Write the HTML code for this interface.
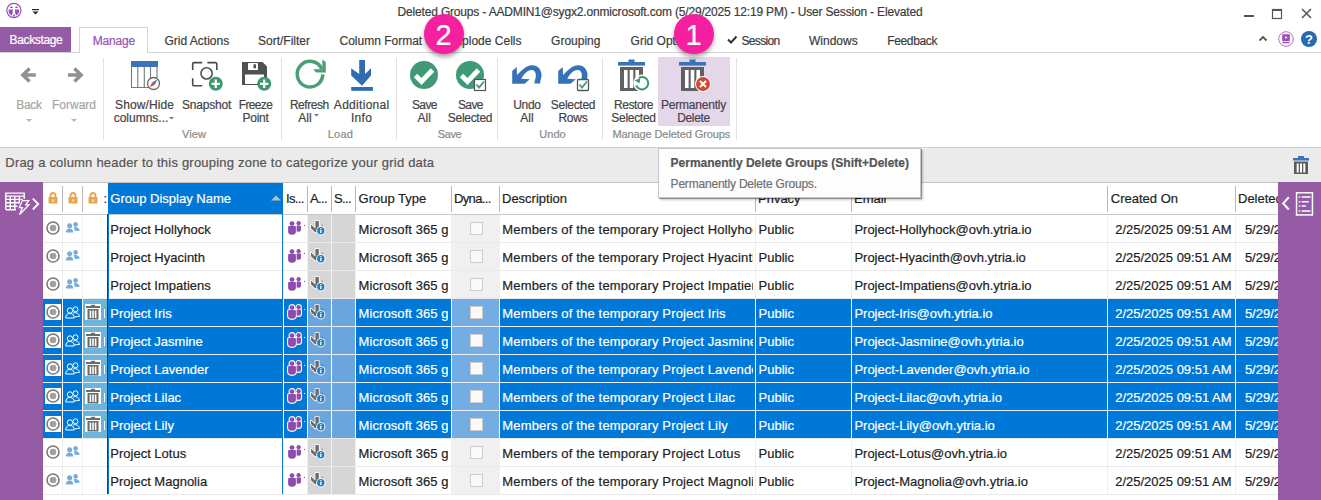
<!DOCTYPE html><html><head><meta charset="utf-8"><style>
html,body{margin:0;padding:0}
body{width:1321px;height:500px;overflow:hidden;position:relative;background:#fff;font-family:"Liberation Sans",sans-serif}
.t{position:absolute;white-space:nowrap;-webkit-text-stroke-width:0.2px}
.r{position:absolute}
</style></head><body>
<svg class="r" style="left:4px;top:1px;" width="20" height="20" viewBox="0 0 20 20"><circle cx="9.9" cy="9.5" r="7.1" fill="none" stroke="#9a50b4" stroke-width="1.2"/><path d="M6 7 Q6 5.2 7.3 5.2 Q8.6 5.2 8.6 7 Z M11.2 7 Q11.2 5.2 12.5 5.2 Q13.8 5.2 13.8 7 Z M4.6 8.6 H8.8 V12 L7.6 14.6 Q5 13.5 4.6 10.5 Z M15.2 8.6 H11 V12 L12.2 14.6 Q14.8 13.5 15.2 10.5 Z M8.6 15.4 L10 12.8 L11.4 15.4 Z" fill="#9a50b4"/></svg>
<svg class="r" style="left:31px;top:7px;" width="10" height="10" viewBox="0 0 10 10"><rect x="1" y="2" width="7" height="1.2" fill="#222"/><path d="M1.5 4.5 L7.5 4.5 L4.5 7.5 Z" fill="#222"/></svg>
<div class="t" style="left:397.6px;top:6.14px;font-size:12px;line-height:12px;color:#3c3c3c;font-weight:normal;letter-spacing:-0.175px">Deleted Groups - AADMIN1@sygx2.onmicrosoft.com (5/29/2025 12:19 PM) - User Session - Elevated</div>
<div class="r" style="left:1244px;top:15px;width:10px;height:2px;background:#555;"></div>
<svg class="r" style="left:1271px;top:8px;" width="12" height="12" viewBox="0 0 12 12"><rect x="1.5" y="1.5" width="9" height="9" fill="none" stroke="#555" stroke-width="1.2"/><rect x="1" y="1" width="10" height="2" fill="#555"/></svg>
<svg class="r" style="left:1300px;top:7px;" width="13" height="13" viewBox="0 0 13 13"><path d="M2 2 L11 11 M11 2 L2 11" stroke="#555" stroke-width="1.5"/></svg>
<div class="r" style="left:0px;top:27px;width:71px;height:25px;background:#955ca5;"></div>
<div class="t" style="left:9.5px;top:34.14px;font-size:12px;line-height:12px;color:#fff;font-weight:normal;letter-spacing:-0.35px">Backstage</div>
<div class="r" style="left:79px;top:27px;width:69px;height:26px;background:#fff;box-sizing:border-box;border:1px solid #d4d4d4;border-bottom:none"></div>
<div class="r" style="left:0px;top:52px;width:1321px;height:1px;background:#d4d4d4;"></div>
<div class="r" style="left:80px;top:52px;width:67px;height:1px;background:#fff;"></div>
<div class="t" style="left:92.7px;top:35.14px;font-size:12px;line-height:12px;color:#9a50b4;font-weight:normal;letter-spacing:-0.18px">Manage</div>
<div class="t" style="left:164.5px;top:35.14px;font-size:12px;line-height:12px;color:#3c3c3c;font-weight:normal;letter-spacing:0px">Grid Actions</div>
<div class="t" style="left:258px;top:35.14px;font-size:12px;line-height:12px;color:#3c3c3c;font-weight:normal;letter-spacing:0px">Sort/Filter</div>
<div class="t" style="left:339.5px;top:35.14px;font-size:12px;line-height:12px;color:#3c3c3c;font-weight:normal;letter-spacing:0px">Column Format</div>
<div class="t" style="left:448.1px;top:35.14px;font-size:12px;line-height:12px;color:#3c3c3c;font-weight:normal;letter-spacing:0px">Explode Cells</div>
<div class="t" style="left:551.1px;top:35.14px;font-size:12px;line-height:12px;color:#3c3c3c;font-weight:normal;letter-spacing:0px">Grouping</div>
<div class="t" style="left:630.6px;top:35.14px;font-size:12px;line-height:12px;color:#3c3c3c;font-weight:normal;letter-spacing:0px">Grid Options</div>
<div class="t" style="left:741.4px;top:35.14px;font-size:12px;line-height:12px;color:#3c3c3c;font-weight:normal;letter-spacing:-0.64px">Session</div>
<div class="t" style="left:809px;top:35.14px;font-size:12px;line-height:12px;color:#3c3c3c;font-weight:normal;letter-spacing:0px">Windows</div>
<div class="t" style="left:887.2px;top:35.14px;font-size:12px;line-height:12px;color:#3c3c3c;font-weight:normal;letter-spacing:-0.35px">Feedback</div>
<svg class="r" style="left:726px;top:34px;" width="13" height="11" viewBox="0 0 13 11"><path d="M2 5.5 L5 8.5 L10.5 2.5" fill="none" stroke="#333" stroke-width="2"/></svg>
<svg class="r" style="left:1258px;top:34px;" width="10" height="8" viewBox="0 0 10 8"><path d="M1.5 6.5 L5 3 L8.5 6.5" fill="none" stroke="#555" stroke-width="1.8"/></svg>
<svg class="r" style="left:1277px;top:31px;" width="18" height="18" viewBox="0 0 18 18"><circle cx="9" cy="8" r="7.3" fill="#fff" stroke="#a45cc0" stroke-width="0.9"/><rect x="5.2" y="3.2" width="7.6" height="6.8" rx="0.5" fill="#9a50b4"/><rect x="5.2" y="10.8" width="7.6" height="1.4" rx="0.4" fill="#9a50b4"/><path d="M8.2 5.2 L10.6 6.6 L8.2 8 Z" fill="#fff"/></svg>
<svg class="r" style="left:1300px;top:30px;" width="18" height="18" viewBox="0 0 18 18"><circle cx="9" cy="9" r="8" fill="#2a6ab1"/><text x="9" y="13.6" text-anchor="middle" font-family="Liberation Sans" font-weight="bold" font-size="13" fill="#fff">?</text></svg>
<div class="r" style="left:0px;top:147px;width:1321px;height:1px;background:#d2d2d2;"></div>
<div class="r" style="left:103px;top:58px;width:1px;height:82px;background:#e1e1e1;"></div>
<div class="r" style="left:281px;top:58px;width:1px;height:82px;background:#e1e1e1;"></div>
<div class="r" style="left:396px;top:58px;width:1px;height:82px;background:#e1e1e1;"></div>
<div class="r" style="left:497px;top:58px;width:1px;height:82px;background:#e1e1e1;"></div>
<div class="r" style="left:602px;top:58px;width:1px;height:82px;background:#e1e1e1;"></div>
<div class="r" style="left:736px;top:58px;width:1px;height:82px;background:#e1e1e1;"></div>
<svg class="r" style="left:18px;top:65px;" width="22" height="20" viewBox="0 0 22 20"><path d="M5 10 H17.8 M11.6 3.4 L4.8 10 L11.6 16.6" fill="none" stroke="#919191" stroke-width="3.5"/></svg>
<svg class="r" style="left:64px;top:65px;" width="22" height="20" viewBox="0 0 22 20"><path d="M17 10 H3.9 M10.4 3.4 L17.2 10 L10.4 16.6" fill="none" stroke="#919191" stroke-width="3.5"/></svg>
<div class="t" style="left:-71px;width:200px;text-align:center;top:99.14px;font-size:12px;line-height:12px;color:#a5a5a5;font-weight:normal;letter-spacing:-0.33px">Back</div>
<div class="t" style="left:-26px;width:200px;text-align:center;top:99.14px;font-size:12px;line-height:12px;color:#a5a5a5;font-weight:normal;">Forward</div>
<svg class="r" style="left:25px;top:118px;" width="8" height="5" viewBox="0 0 8 5"><path d="M1 1 L7 1 L4 4 Z" fill="#b5b5b5"/></svg>
<svg class="r" style="left:70px;top:118px;" width="8" height="5" viewBox="0 0 8 5"><path d="M1 1 L7 1 L4 4 Z" fill="#b5b5b5"/></svg>
<svg class="r" style="left:130px;top:60px;" width="32" height="32" viewBox="0 0 32 32"><rect x="1" y="1" width="27" height="6" fill="#3a73b9"/><path d="M1.5 7 V27.5 H20 M7.8 7 V27.5 M14.3 7 V27.5 M20.5 7 V18 M27 7 V18" fill="none" stroke="#7a7a7a" stroke-width="1.1"/><circle cx="23.5" cy="23.5" r="6" fill="#fff" stroke="#6a6a6a" stroke-width="1.3"/><path d="M27.2 19.8 L24.8 24.8 L22.2 22.2 Z" fill="#3a73b9"/><path d="M19.8 27.2 L22.2 22.2 L24.8 24.8 Z" fill="#e0462f"/></svg>
<div class="t" style="left:44.5px;width:200px;text-align:center;top:99.14px;font-size:12px;line-height:12px;color:#444;font-weight:normal;letter-spacing:0.1px">Show/Hide</div>
<div class="t" style="left:41px;width:200px;text-align:center;top:112.14px;font-size:12px;line-height:12px;color:#444;font-weight:normal;">columns...</div>
<svg class="r" style="left:168px;top:116px;" width="8" height="5" viewBox="0 0 8 5"><path d="M1 1 L6 1 L3.5 3.5 Z" fill="#777"/></svg>
<div class="t" style="left:94px;width:200px;text-align:center;top:128.14px;font-size:12px;line-height:12px;color:#8a8a8a;font-weight:normal;font-size:11px;letter-spacing:0.15px">View</div>
<svg class="r" style="left:190px;top:60px;" width="34" height="34" viewBox="0 0 34 34"><path d="M2.7 10 V4 Q2.7 2.6 4.1 2.6 H12.2 M17.4 2.6 H25.4 Q26.8 2.6 26.8 4 V10 M2.7 18.2 V24.4 Q2.7 25.8 4.1 25.8 H12.2" fill="none" stroke="#4a4a4a" stroke-width="1.6"/><circle cx="16.6" cy="13.4" r="5.6" fill="none" stroke="#505050" stroke-width="1.6"/><circle cx="25.8" cy="23.8" r="7" fill="#3d9a6c"/><path d="M25.8 19.6 V28 M21.6 23.8 H30" stroke="#fff" stroke-width="2.2"/></svg>
<div class="t" style="left:106.5px;width:200px;text-align:center;top:99.14px;font-size:12px;line-height:12px;color:#444;font-weight:normal;letter-spacing:-0.2px">Snapshot</div>
<svg class="r" style="left:240px;top:60px;" width="34" height="34" viewBox="0 0 34 34"><path d="M2 2 H22.5 L27 6.5 V25 H2 Z" fill="#505050"/><rect x="8" y="3" width="10" height="7" rx="0.8" fill="#fff"/><rect x="13.5" y="4.3" width="2.5" height="4" fill="#505050"/><rect x="5" y="14.5" width="19" height="9.5" fill="#fff"/><circle cx="24.2" cy="23.8" r="7" fill="#3d9a6c"/><path d="M24.2 19.6 V28 M20 23.8 H28.4" stroke="#fff" stroke-width="2.2"/></svg>
<div class="t" style="left:155.5px;width:200px;text-align:center;top:99.14px;font-size:12px;line-height:12px;color:#444;font-weight:normal;letter-spacing:-0.67px">Freeze</div>
<div class="t" style="left:155.5px;width:200px;text-align:center;top:112.14px;font-size:12px;line-height:12px;color:#444;font-weight:normal;letter-spacing:-0.3px">Point</div>
<svg class="r" style="left:292px;top:56px;" width="38" height="36" viewBox="0 0 38 36"><path d="M30.8 18.4 A12.8 12.8 0 1 1 29.7 13.0" fill="none" stroke="#4b9e77" stroke-width="3.5"/><path d="M30.4 3.2 L33.8 6.3 L33.8 16.6 L24.1 16.6 L21.1 13.2 L30.3 13.2 Z" fill="#4b9e77"/></svg>
<div class="t" style="left:209.3px;width:200px;text-align:center;top:99.14px;font-size:12px;line-height:12px;color:#444;font-weight:normal;letter-spacing:-0.46px">Refresh</div>
<div class="t" style="left:205px;width:200px;text-align:center;top:112.14px;font-size:12px;line-height:12px;color:#444;font-weight:normal;">All</div>
<svg class="r" style="left:313px;top:113px;" width="8" height="5" viewBox="0 0 8 5"><path d="M1 1 L6 1 L3.5 3.5 Z" fill="#777"/></svg>
<svg class="r" style="left:349px;top:58px;" width="26" height="36" viewBox="0 0 26 36"><path d="M10.2 2 H16 V16 L22 10.3 V17.5 L13 27.8 L2.2 17.5 V10.3 L10.2 16 Z" fill="#2e6db4"/><rect x="2.2" y="29" width="21.7" height="3.8" fill="#2e6db4"/></svg>
<div class="t" style="left:261.7px;width:200px;text-align:center;top:99.14px;font-size:12px;line-height:12px;color:#444;font-weight:normal;letter-spacing:0.3px">Additional</div>
<div class="t" style="left:261.5px;width:200px;text-align:center;top:112.14px;font-size:12px;line-height:12px;color:#444;font-weight:normal;letter-spacing:0.3px">Info</div>
<div class="t" style="left:240.39999999999998px;width:200px;text-align:center;top:128.14px;font-size:12px;line-height:12px;color:#8a8a8a;font-weight:normal;font-size:11px;letter-spacing:0.15px">Load</div>
<svg class="r" style="left:408px;top:59px;" width="32" height="32" viewBox="0 0 32 32"><circle cx="16" cy="16" r="14" fill="#3f9a75"/><path d="M7.5 16.5 L13.5 22.5 L24.5 11" fill="none" stroke="#fff" stroke-width="4.8"/></svg>
<div class="t" style="left:324.4px;width:200px;text-align:center;top:99.14px;font-size:12px;line-height:12px;color:#444;font-weight:normal;letter-spacing:-0.6px">Save</div>
<div class="t" style="left:324.2px;width:200px;text-align:center;top:112.14px;font-size:12px;line-height:12px;color:#444;font-weight:normal;">All</div>
<svg class="r" style="left:454px;top:59px;" width="34" height="34" viewBox="0 0 34 34"><circle cx="16" cy="16" r="14" fill="#3f9a75"/><path d="M7.5 16.5 L13.5 22.5 L24.5 11" fill="none" stroke="#fff" stroke-width="4.8"/><rect x="20.5" y="20.5" width="11" height="11" fill="#fff" stroke="#555" stroke-width="1.2"/><path d="M22.5 25.5 L25 28.5 L30 22.5" fill="none" stroke="#3f9a75" stroke-width="1.8"/></svg>
<div class="t" style="left:370.4px;width:200px;text-align:center;top:99.14px;font-size:12px;line-height:12px;color:#444;font-weight:normal;letter-spacing:-0.6px">Save</div>
<div class="t" style="left:370px;width:200px;text-align:center;top:112.14px;font-size:12px;line-height:12px;color:#444;font-weight:normal;letter-spacing:-0.3px">Selected</div>
<div class="t" style="left:349.5px;width:200px;text-align:center;top:128.14px;font-size:12px;line-height:12px;color:#8a8a8a;font-weight:normal;font-size:11px;letter-spacing:-0.4px">Save</div>
<svg class="r" style="left:508px;top:60px;" width="36" height="28" viewBox="0 0 36 28"><path d="M4.2 10.9 L8.7 7 L9 15.1 C13 11 18 5.5 24 5.3 C30 5.2 33.6 10 33.6 15.7 L31.9 23.5 L26.3 23.5 L27.8 16.5 C28.2 12.5 26.5 10 23.5 10 C20 10 16.5 13 13.2 18.8 L21.8 19.3 L16.5 23.8 L4.2 23.8 Z" fill="#3672b8"/></svg>
<div class="t" style="left:427px;width:200px;text-align:center;top:99.14px;font-size:12px;line-height:12px;color:#444;font-weight:normal;letter-spacing:-0.3px">Undo</div>
<div class="t" style="left:427px;width:200px;text-align:center;top:112.14px;font-size:12px;line-height:12px;color:#444;font-weight:normal;">All</div>
<svg class="r" style="left:554px;top:60px;" width="38" height="34" viewBox="0 0 38 34"><path d="M4.2 10.9 L8.7 7 L9 15.1 C13 11 18 5.5 24 5.3 C30 5.2 33.6 10 33.6 15.7 L31.9 23.5 L26.3 23.5 L27.8 16.5 C28.2 12.5 26.5 10 23.5 10 C20 10 16.5 13 13.2 18.8 L21.8 19.3 L16.5 23.8 L4.2 23.8 Z" fill="#3672b8"/><rect x="23.5" y="19.5" width="11" height="11" rx="1" fill="#fff" stroke="#555" stroke-width="1.3"/><path d="M25.5 24.5 L28 27.5 L33 21.5" fill="none" stroke="#3f9a75" stroke-width="1.8"/></svg>
<div class="t" style="left:473px;width:200px;text-align:center;top:99.14px;font-size:12px;line-height:12px;color:#444;font-weight:normal;letter-spacing:-0.3px">Selected</div>
<div class="t" style="left:473px;width:200px;text-align:center;top:112.14px;font-size:12px;line-height:12px;color:#444;font-weight:normal;letter-spacing:-0.2px">Rows</div>
<div class="t" style="left:452.5px;width:200px;text-align:center;top:128.14px;font-size:12px;line-height:12px;color:#8a8a8a;font-weight:normal;font-size:11px">Undo</div>
<div class="r" style="left:658px;top:57px;width:72px;height:69px;background:#e4d7e9;"></div>
<svg class="r" style="left:616px;top:58px;" width="36" height="36" viewBox="0 0 36 36"><rect x="2" y="4" width="27" height="3.6" fill="#3a73b9"/><rect x="12.5" y="1.5" width="6" height="3" fill="#3a73b9"/><path d="M4 9 H27 V33 H4 Z" fill="#616161"/><rect x="8" y="12" width="3.6" height="18" fill="#fff"/><rect x="13.7" y="12" width="3.6" height="18" fill="#fff"/><rect x="19.4" y="12" width="3.6" height="18" fill="#fff"/><circle cx="26" cy="25.2" r="8.6" fill="#fff"/><path d="M22.9 19.83 A6.2 6.2 0 1 1 20.17 27.32" fill="none" stroke="#3d9a6c" stroke-width="2"/><path d="M18.6 22.6 L24.4 19.9 L23.6 25.3 Z" fill="#3d9a6c"/></svg>
<svg class="r" style="left:677px;top:58px;" width="36" height="36" viewBox="0 0 36 36"><rect x="2" y="4" width="27" height="3.6" fill="#3a73b9"/><rect x="12.5" y="1.5" width="6" height="3" fill="#3a73b9"/><path d="M4 9 H27 V33 H4 Z" fill="#616161"/><rect x="8" y="12" width="3.6" height="18" fill="#fff"/><rect x="13.7" y="12" width="3.6" height="18" fill="#fff"/><rect x="19.4" y="12" width="3.6" height="18" fill="#fff"/><circle cx="26" cy="26" r="8" fill="#fff"/><circle cx="26" cy="26" r="7" fill="#d04a32"/><path d="M23 23 L29 29 M29 23 L23 29" stroke="#fff" stroke-width="2"/></svg>
<div class="t" style="left:533.5px;width:200px;text-align:center;top:99.14px;font-size:12px;line-height:12px;color:#444;font-weight:normal;letter-spacing:-0.43px">Restore</div>
<div class="t" style="left:533.5px;width:200px;text-align:center;top:112.14px;font-size:12px;line-height:12px;color:#444;font-weight:normal;letter-spacing:-0.3px">Selected</div>
<div class="t" style="left:593.5px;width:200px;text-align:center;top:99.14px;font-size:12px;line-height:12px;color:#4a3f52;font-weight:normal;letter-spacing:-0.2px">Permanently</div>
<div class="t" style="left:593.5px;width:200px;text-align:center;top:112.14px;font-size:12px;line-height:12px;color:#4a3f52;font-weight:normal;letter-spacing:-0.38px">Delete</div>
<div class="t" style="left:571.3px;width:200px;text-align:center;top:128.99px;font-size:11px;line-height:11px;color:#8a8a8a;font-weight:normal;letter-spacing:-0.1px">Manage Deleted Groups</div>
<div class="r" style="left:0px;top:148px;width:1321px;height:34px;background:#ebebeb;"></div>
<div class="t" style="left:5.3px;top:156.30px;font-size:13px;line-height:13px;color:#555;font-weight:normal;letter-spacing:0.21px">Drag a column header to this grouping zone to categorize your grid data</div>
<svg class="r" style="left:1290px;top:154px;" width="22" height="22" viewBox="0 0 22 22"><rect x="3" y="4" width="16" height="2.5" fill="#3a73b9"/><rect x="8" y="2" width="6" height="2.5" fill="#3a73b9"/><path d="M4 7.5 H18 V20 H4 Z" fill="#5c5c5c"/><rect x="6.7" y="9.5" width="2" height="9" fill="#fff"/><rect x="10" y="9.5" width="2" height="9" fill="#fff"/><rect x="13.3" y="9.5" width="2" height="9" fill="#fff"/></svg>
<div class="r" style="left:43px;top:182px;width:1235px;height:1px;background:#c4c4c4;"></div>
<div class="r" style="left:43px;top:183px;width:1235px;height:31px;background:#fff;"></div>
<div class="r" style="left:43px;top:214px;width:1235px;height:1px;background:#c9c9c9;"></div>
<div class="r" style="left:62px;top:186px;width:1px;height:26px;background:#b9b9b9;"></div>
<div class="r" style="left:82px;top:186px;width:1px;height:26px;background:#b9b9b9;"></div>
<div class="r" style="left:307px;top:186px;width:1px;height:26px;background:#b9b9b9;"></div>
<div class="r" style="left:331px;top:186px;width:1px;height:26px;background:#b9b9b9;"></div>
<div class="r" style="left:355px;top:186px;width:1px;height:26px;background:#b9b9b9;"></div>
<div class="r" style="left:451px;top:186px;width:1px;height:26px;background:#b9b9b9;"></div>
<div class="r" style="left:499px;top:186px;width:1px;height:26px;background:#b9b9b9;"></div>
<div class="r" style="left:755px;top:186px;width:1px;height:26px;background:#b9b9b9;"></div>
<div class="r" style="left:851px;top:186px;width:1px;height:26px;background:#b9b9b9;"></div>
<div class="r" style="left:1107px;top:186px;width:1px;height:26px;background:#b9b9b9;"></div>
<div class="r" style="left:1235px;top:186px;width:1px;height:26px;background:#b9b9b9;"></div>
<div class="r" style="left:108px;top:183px;width:175px;height:31px;background:#0078d7;"></div>
<div class="t" style="left:110.3px;top:192.20px;font-size:13px;line-height:13px;color:#fff;font-weight:normal;">Group Display Name</div>
<svg class="r" style="left:269px;top:194px;" width="14" height="8" viewBox="0 0 14 8"><path d="M2 6.5 L7 1.5 L12 6.5 Z" fill="#bdbdbd"/></svg>
<svg class="r" style="left:47.5px;top:192px;" width="10" height="12" viewBox="0 0 10 12"><rect x="0.5" y="5" width="9" height="6.5" fill="#e6a84a"/><path d="M2.5 5.5 V3.8 Q2.5 1 5 1 Q7.5 1 7.5 3.8 V5.5" fill="none" stroke="#e6a84a" stroke-width="1.8"/><rect x="4.4" y="7.3" width="1.2" height="2.5" fill="#fff"/></svg>
<svg class="r" style="left:67.5px;top:192px;" width="10" height="12" viewBox="0 0 10 12"><rect x="0.5" y="5" width="9" height="6.5" fill="#e6a84a"/><path d="M2.5 5.5 V3.8 Q2.5 1 5 1 Q7.5 1 7.5 3.8 V5.5" fill="none" stroke="#e6a84a" stroke-width="1.8"/><rect x="4.4" y="7.3" width="1.2" height="2.5" fill="#fff"/></svg>
<svg class="r" style="left:87.5px;top:192px;" width="10" height="12" viewBox="0 0 10 12"><rect x="0.5" y="5" width="9" height="6.5" fill="#e6a84a"/><path d="M2.5 5.5 V3.8 Q2.5 1 5 1 Q7.5 1 7.5 3.8 V5.5" fill="none" stroke="#e6a84a" stroke-width="1.8"/><rect x="4.4" y="7.3" width="1.2" height="2.5" fill="#fff"/></svg>
<div class="t" style="left:103.5px;top:192.20px;font-size:13px;line-height:13px;color:#333;font-weight:normal;">:</div>
<div class="t" style="left:286px;top:192.20px;font-size:13px;line-height:13px;color:#1e1e1e;font-weight:normal;letter-spacing:-0.65px">Is...</div>
<div class="t" style="left:310px;top:192.20px;font-size:13px;line-height:13px;color:#1e1e1e;font-weight:normal;letter-spacing:-0.65px">A...</div>
<div class="t" style="left:334px;top:192.20px;font-size:13px;line-height:13px;color:#1e1e1e;font-weight:normal;letter-spacing:-0.65px">S...</div>
<div class="t" style="left:358.6px;top:192.20px;font-size:13px;line-height:13px;color:#1e1e1e;font-weight:normal;">Group Type</div>
<div class="t" style="left:454px;top:192.20px;font-size:13px;line-height:13px;color:#1e1e1e;font-weight:normal;letter-spacing:-0.65px">Dyna...</div>
<div class="t" style="left:502px;top:192.20px;font-size:13px;line-height:13px;color:#1e1e1e;font-weight:normal;">Description</div>
<div class="t" style="left:758px;top:192.20px;font-size:13px;line-height:13px;color:#1e1e1e;font-weight:normal;">Privacy</div>
<div class="t" style="left:854px;top:192.20px;font-size:13px;line-height:13px;color:#1e1e1e;font-weight:normal;">Email</div>
<div class="t" style="left:1110.8px;top:192.20px;font-size:13px;line-height:13px;color:#1e1e1e;font-weight:normal;">Created On</div>
<div class="t" style="left:1238px;top:192.20px;font-size:13px;line-height:13px;color:#1e1e1e;font-weight:normal;">Deleted</div>
<div class="r" style="left:308px;top:215px;width:47px;height:27px;background:#d6d6d6;"></div>
<div class="r" style="left:452px;top:215px;width:47px;height:27px;background:#f0f0f0;"></div>
<div class="r" style="left:43px;top:242px;width:1235px;height:1px;background:#eaeaea;"></div>
<div class="r" style="left:62px;top:215px;width:1px;height:27px;background:#efefef;"></div>
<div class="r" style="left:82px;top:215px;width:1px;height:27px;background:#efefef;"></div>
<div class="r" style="left:307px;top:215px;width:1px;height:27px;background:#efefef;"></div>
<div class="r" style="left:331px;top:215px;width:1px;height:27px;background:#efefef;"></div>
<div class="r" style="left:355px;top:215px;width:1px;height:27px;background:#efefef;"></div>
<div class="r" style="left:451px;top:215px;width:1px;height:27px;background:#efefef;"></div>
<div class="r" style="left:499px;top:215px;width:1px;height:27px;background:#efefef;"></div>
<div class="r" style="left:755px;top:215px;width:1px;height:27px;background:#efefef;"></div>
<div class="r" style="left:851px;top:215px;width:1px;height:27px;background:#efefef;"></div>
<div class="r" style="left:1107px;top:215px;width:1px;height:27px;background:#efefef;"></div>
<div class="r" style="left:1235px;top:215px;width:1px;height:27px;background:#efefef;"></div>
<svg class="r" style="left:45px;top:220px;" width="16" height="16" viewBox="0 0 16 16"><circle cx="8" cy="8" r="6" fill="#fff" stroke="#7c7c7c" stroke-width="1.6"/><circle cx="8" cy="8" r="3.3" fill="#a0a0a0"/></svg>
<svg class="r" style="left:65px;top:222px;" width="16" height="14" viewBox="0 0 16 14"><circle cx="4.6" cy="3.8" r="2.5" fill="#77abdc"/><path d="M1 10.5 Q1 6.6 4.6 6.6 Q8.2 6.6 8.2 10.5 Z" fill="#77abdc"/><circle cx="10.6" cy="2.4" r="2.3" fill="#77abdc"/><path d="M8.6 5.2 Q13.6 4.2 14.8 8.8 L10 9 Z" fill="#77abdc"/></svg>
<div class="r" style="left:108px;top:215px;width:175px;height:27px;overflow:hidden"><div class="t" style="left:2.3px;top:7.50px;font-size:13px;line-height:13px;color:#1e1e1e">Project Hollyhock</div></div>
<svg class="r" style="left:287px;top:220px;" width="16" height="18" viewBox="0 0 16 18"><circle cx="5" cy="3.6" r="2.4" fill="#8e4bb0"/><path d="M1.1 7.3 Q1.1 6.1 2.3 6.1 H7.7 Q8.9 6.1 8.9 7.3 V11.5 Q8.9 14.8 5 14.8 Q1.1 14.8 1.1 11.5 Z" fill="#8e4bb0"/><circle cx="11.6" cy="3.2" r="2.1" fill="#8e4bb0"/><path d="M9.6 5.4 H13 Q14 5.4 14 6.4 V9.8 Q14 11.8 12 11.8 L9.6 11.5 Z" fill="#8e4bb0"/></svg>
<div class="r" style="left:304px;top:225px;width:1px;height:1px;background:#c0501e;"></div>
<svg class="r" style="left:310px;top:220px;" width="18" height="18" viewBox="0 0 18 18"><path d="M5.4 1 H8.8 V10.5 L5.4 12.6 L1 8.2 V4.6 L5.4 8.6 Z" fill="#fff" stroke="#fff" stroke-width="1.6" stroke-linejoin="round"/><path d="M5.4 1 H8.8 V10.5 L5.4 12.6 L1 8.2 V4.6 L5.4 8.6 Z" fill="#6b6b6b"/><rect x="11.8" y="4.8" width="1" height="1" fill="#555"/><circle cx="10.8" cy="10.8" r="4.6" fill="#fff"/><circle cx="10.8" cy="10.8" r="3.7" fill="#1f7fc4"/><rect x="10.2" y="9.9" width="1.3" height="3.2" fill="#fff"/><rect x="10.2" y="8.1" width="1.3" height="1.2" fill="#fff"/></svg>
<div class="r" style="left:356px;top:215px;width:92px;height:27px;overflow:hidden"><div class="t" style="left:2.6px;letter-spacing:0.08px;top:7.50px;font-size:13px;line-height:13px;color:#1e1e1e">Microsoft 365 groups</div></div>
<div class="r" style="left:470px;top:222px;width:13px;height:13px;background:#f9f9f9;box-sizing:border-box;border:1px solid #cdcdcd"></div>
<div class="r" style="left:500px;top:215px;width:253px;height:27px;overflow:hidden"><div class="t" style="left:2.3px;letter-spacing:0.16px;top:7.50px;font-size:13px;line-height:13px;color:#1e1e1e">Members of the temporary Project Hollyhock</div></div>
<div class="t" style="left:758.5px;top:222.50px;font-size:13px;line-height:13px;color:#1e1e1e;font-weight:normal;">Public</div>
<div class="t" style="left:854.4px;top:222.50px;font-size:13px;line-height:13px;color:#1e1e1e;font-weight:normal;">Project-Hollyhock@ovh.ytria.io</div>
<div class="t" style="left:1115.2px;top:222.50px;font-size:13px;line-height:13px;color:#1e1e1e;font-weight:normal;">2/25/2025 09:51 AM</div>
<div class="r" style="left:1236px;top:215px;width:42px;height:27px;overflow:hidden"><div class="t" style="left:8.9px;top:7.50px;font-size:13px;line-height:13px;color:#1e1e1e">5/29/2025 12:19 PM</div></div>
<div class="r" style="left:308px;top:243px;width:47px;height:27px;background:#d6d6d6;"></div>
<div class="r" style="left:452px;top:243px;width:47px;height:27px;background:#f0f0f0;"></div>
<div class="r" style="left:43px;top:270px;width:1235px;height:1px;background:#eaeaea;"></div>
<div class="r" style="left:62px;top:243px;width:1px;height:27px;background:#efefef;"></div>
<div class="r" style="left:82px;top:243px;width:1px;height:27px;background:#efefef;"></div>
<div class="r" style="left:307px;top:243px;width:1px;height:27px;background:#efefef;"></div>
<div class="r" style="left:331px;top:243px;width:1px;height:27px;background:#efefef;"></div>
<div class="r" style="left:355px;top:243px;width:1px;height:27px;background:#efefef;"></div>
<div class="r" style="left:451px;top:243px;width:1px;height:27px;background:#efefef;"></div>
<div class="r" style="left:499px;top:243px;width:1px;height:27px;background:#efefef;"></div>
<div class="r" style="left:755px;top:243px;width:1px;height:27px;background:#efefef;"></div>
<div class="r" style="left:851px;top:243px;width:1px;height:27px;background:#efefef;"></div>
<div class="r" style="left:1107px;top:243px;width:1px;height:27px;background:#efefef;"></div>
<div class="r" style="left:1235px;top:243px;width:1px;height:27px;background:#efefef;"></div>
<svg class="r" style="left:45px;top:248px;" width="16" height="16" viewBox="0 0 16 16"><circle cx="8" cy="8" r="6" fill="#fff" stroke="#7c7c7c" stroke-width="1.6"/><circle cx="8" cy="8" r="3.3" fill="#a0a0a0"/></svg>
<svg class="r" style="left:65px;top:250px;" width="16" height="14" viewBox="0 0 16 14"><circle cx="4.6" cy="3.8" r="2.5" fill="#77abdc"/><path d="M1 10.5 Q1 6.6 4.6 6.6 Q8.2 6.6 8.2 10.5 Z" fill="#77abdc"/><circle cx="10.6" cy="2.4" r="2.3" fill="#77abdc"/><path d="M8.6 5.2 Q13.6 4.2 14.8 8.8 L10 9 Z" fill="#77abdc"/></svg>
<div class="r" style="left:108px;top:243px;width:175px;height:27px;overflow:hidden"><div class="t" style="left:2.3px;top:7.50px;font-size:13px;line-height:13px;color:#1e1e1e">Project Hyacinth</div></div>
<svg class="r" style="left:287px;top:248px;" width="16" height="18" viewBox="0 0 16 18"><circle cx="5" cy="3.6" r="2.4" fill="#8e4bb0"/><path d="M1.1 7.3 Q1.1 6.1 2.3 6.1 H7.7 Q8.9 6.1 8.9 7.3 V11.5 Q8.9 14.8 5 14.8 Q1.1 14.8 1.1 11.5 Z" fill="#8e4bb0"/><circle cx="11.6" cy="3.2" r="2.1" fill="#8e4bb0"/><path d="M9.6 5.4 H13 Q14 5.4 14 6.4 V9.8 Q14 11.8 12 11.8 L9.6 11.5 Z" fill="#8e4bb0"/></svg>
<div class="r" style="left:304px;top:253px;width:1px;height:1px;background:#c0501e;"></div>
<svg class="r" style="left:310px;top:248px;" width="18" height="18" viewBox="0 0 18 18"><path d="M5.4 1 H8.8 V10.5 L5.4 12.6 L1 8.2 V4.6 L5.4 8.6 Z" fill="#fff" stroke="#fff" stroke-width="1.6" stroke-linejoin="round"/><path d="M5.4 1 H8.8 V10.5 L5.4 12.6 L1 8.2 V4.6 L5.4 8.6 Z" fill="#6b6b6b"/><rect x="11.8" y="4.8" width="1" height="1" fill="#555"/><circle cx="10.8" cy="10.8" r="4.6" fill="#fff"/><circle cx="10.8" cy="10.8" r="3.7" fill="#1f7fc4"/><rect x="10.2" y="9.9" width="1.3" height="3.2" fill="#fff"/><rect x="10.2" y="8.1" width="1.3" height="1.2" fill="#fff"/></svg>
<div class="r" style="left:356px;top:243px;width:92px;height:27px;overflow:hidden"><div class="t" style="left:2.6px;letter-spacing:0.08px;top:7.50px;font-size:13px;line-height:13px;color:#1e1e1e">Microsoft 365 groups</div></div>
<div class="r" style="left:470px;top:250px;width:13px;height:13px;background:#f9f9f9;box-sizing:border-box;border:1px solid #cdcdcd"></div>
<div class="r" style="left:500px;top:243px;width:253px;height:27px;overflow:hidden"><div class="t" style="left:2.3px;letter-spacing:0.16px;top:7.50px;font-size:13px;line-height:13px;color:#1e1e1e">Members of the temporary Project Hyacinth</div></div>
<div class="t" style="left:758.5px;top:250.50px;font-size:13px;line-height:13px;color:#1e1e1e;font-weight:normal;">Public</div>
<div class="t" style="left:854.4px;top:250.50px;font-size:13px;line-height:13px;color:#1e1e1e;font-weight:normal;">Project-Hyacinth@ovh.ytria.io</div>
<div class="t" style="left:1115.2px;top:250.50px;font-size:13px;line-height:13px;color:#1e1e1e;font-weight:normal;">2/25/2025 09:51 AM</div>
<div class="r" style="left:1236px;top:243px;width:42px;height:27px;overflow:hidden"><div class="t" style="left:8.9px;top:7.50px;font-size:13px;line-height:13px;color:#1e1e1e">5/29/2025 12:19 PM</div></div>
<div class="r" style="left:308px;top:271px;width:47px;height:27px;background:#d6d6d6;"></div>
<div class="r" style="left:452px;top:271px;width:47px;height:27px;background:#f0f0f0;"></div>
<div class="r" style="left:43px;top:298px;width:1235px;height:1px;background:#eaeaea;"></div>
<div class="r" style="left:62px;top:271px;width:1px;height:27px;background:#efefef;"></div>
<div class="r" style="left:82px;top:271px;width:1px;height:27px;background:#efefef;"></div>
<div class="r" style="left:307px;top:271px;width:1px;height:27px;background:#efefef;"></div>
<div class="r" style="left:331px;top:271px;width:1px;height:27px;background:#efefef;"></div>
<div class="r" style="left:355px;top:271px;width:1px;height:27px;background:#efefef;"></div>
<div class="r" style="left:451px;top:271px;width:1px;height:27px;background:#efefef;"></div>
<div class="r" style="left:499px;top:271px;width:1px;height:27px;background:#efefef;"></div>
<div class="r" style="left:755px;top:271px;width:1px;height:27px;background:#efefef;"></div>
<div class="r" style="left:851px;top:271px;width:1px;height:27px;background:#efefef;"></div>
<div class="r" style="left:1107px;top:271px;width:1px;height:27px;background:#efefef;"></div>
<div class="r" style="left:1235px;top:271px;width:1px;height:27px;background:#efefef;"></div>
<svg class="r" style="left:45px;top:276px;" width="16" height="16" viewBox="0 0 16 16"><circle cx="8" cy="8" r="6" fill="#fff" stroke="#7c7c7c" stroke-width="1.6"/><circle cx="8" cy="8" r="3.3" fill="#a0a0a0"/></svg>
<svg class="r" style="left:65px;top:278px;" width="16" height="14" viewBox="0 0 16 14"><circle cx="4.6" cy="3.8" r="2.5" fill="#77abdc"/><path d="M1 10.5 Q1 6.6 4.6 6.6 Q8.2 6.6 8.2 10.5 Z" fill="#77abdc"/><circle cx="10.6" cy="2.4" r="2.3" fill="#77abdc"/><path d="M8.6 5.2 Q13.6 4.2 14.8 8.8 L10 9 Z" fill="#77abdc"/></svg>
<div class="r" style="left:108px;top:271px;width:175px;height:27px;overflow:hidden"><div class="t" style="left:2.3px;top:7.50px;font-size:13px;line-height:13px;color:#1e1e1e">Project Impatiens</div></div>
<svg class="r" style="left:287px;top:276px;" width="16" height="18" viewBox="0 0 16 18"><circle cx="5" cy="3.6" r="2.4" fill="#8e4bb0"/><path d="M1.1 7.3 Q1.1 6.1 2.3 6.1 H7.7 Q8.9 6.1 8.9 7.3 V11.5 Q8.9 14.8 5 14.8 Q1.1 14.8 1.1 11.5 Z" fill="#8e4bb0"/><circle cx="11.6" cy="3.2" r="2.1" fill="#8e4bb0"/><path d="M9.6 5.4 H13 Q14 5.4 14 6.4 V9.8 Q14 11.8 12 11.8 L9.6 11.5 Z" fill="#8e4bb0"/></svg>
<div class="r" style="left:304px;top:281px;width:1px;height:1px;background:#c0501e;"></div>
<svg class="r" style="left:310px;top:276px;" width="18" height="18" viewBox="0 0 18 18"><path d="M5.4 1 H8.8 V10.5 L5.4 12.6 L1 8.2 V4.6 L5.4 8.6 Z" fill="#fff" stroke="#fff" stroke-width="1.6" stroke-linejoin="round"/><path d="M5.4 1 H8.8 V10.5 L5.4 12.6 L1 8.2 V4.6 L5.4 8.6 Z" fill="#6b6b6b"/><rect x="11.8" y="4.8" width="1" height="1" fill="#555"/><circle cx="10.8" cy="10.8" r="4.6" fill="#fff"/><circle cx="10.8" cy="10.8" r="3.7" fill="#1f7fc4"/><rect x="10.2" y="9.9" width="1.3" height="3.2" fill="#fff"/><rect x="10.2" y="8.1" width="1.3" height="1.2" fill="#fff"/></svg>
<div class="r" style="left:356px;top:271px;width:92px;height:27px;overflow:hidden"><div class="t" style="left:2.6px;letter-spacing:0.08px;top:7.50px;font-size:13px;line-height:13px;color:#1e1e1e">Microsoft 365 groups</div></div>
<div class="r" style="left:470px;top:278px;width:13px;height:13px;background:#f9f9f9;box-sizing:border-box;border:1px solid #cdcdcd"></div>
<div class="r" style="left:500px;top:271px;width:253px;height:27px;overflow:hidden"><div class="t" style="left:2.3px;letter-spacing:0.16px;top:7.50px;font-size:13px;line-height:13px;color:#1e1e1e">Members of the temporary Project Impatiens</div></div>
<div class="t" style="left:758.5px;top:278.50px;font-size:13px;line-height:13px;color:#1e1e1e;font-weight:normal;">Public</div>
<div class="t" style="left:854.4px;top:278.50px;font-size:13px;line-height:13px;color:#1e1e1e;font-weight:normal;">Project-Impatiens@ovh.ytria.io</div>
<div class="t" style="left:1115.2px;top:278.50px;font-size:13px;line-height:13px;color:#1e1e1e;font-weight:normal;">2/25/2025 09:51 AM</div>
<div class="r" style="left:1236px;top:271px;width:42px;height:27px;overflow:hidden"><div class="t" style="left:8.9px;top:7.50px;font-size:13px;line-height:13px;color:#1e1e1e">5/29/2025 12:19 PM</div></div>
<div class="r" style="left:43px;top:299px;width:1235px;height:27px;background:#0078d7;"></div>
<div class="r" style="left:83px;top:299px;width:24px;height:27px;background:#6bb5dc;"></div>
<div class="r" style="left:308px;top:299px;width:47px;height:27px;background:#6aa6dd;"></div>
<div class="r" style="left:452px;top:299px;width:47px;height:27px;background:#73ade3;"></div>
<div class="r" style="left:45px;top:304px;width:16px;height:16px;background:#fff;"></div>
<div class="r" style="left:43px;top:326px;width:1235px;height:1px;background:#e8f1fa;"></div>
<div class="r" style="left:62px;top:299px;width:1px;height:27px;background:#fff;"></div>
<div class="r" style="left:82px;top:299px;width:1px;height:27px;background:#fff;"></div>
<div class="r" style="left:307px;top:299px;width:1px;height:27px;background:#fff;"></div>
<div class="r" style="left:331px;top:299px;width:1px;height:27px;background:#fff;"></div>
<div class="r" style="left:355px;top:299px;width:1px;height:27px;background:#fff;"></div>
<div class="r" style="left:451px;top:299px;width:1px;height:27px;background:#fff;"></div>
<div class="r" style="left:499px;top:299px;width:1px;height:27px;background:#fff;"></div>
<div class="r" style="left:755px;top:299px;width:1px;height:27px;background:#fff;"></div>
<div class="r" style="left:851px;top:299px;width:1px;height:27px;background:#fff;"></div>
<div class="r" style="left:1107px;top:299px;width:1px;height:27px;background:#fff;"></div>
<div class="r" style="left:1235px;top:299px;width:1px;height:27px;background:#fff;"></div>
<svg class="r" style="left:45px;top:304px;" width="16" height="16" viewBox="0 0 16 16"><circle cx="8" cy="8" r="6" fill="#fff" stroke="#7c7c7c" stroke-width="1.6"/><circle cx="8" cy="8" r="3.3" fill="#a0a0a0"/></svg>
<svg class="r" style="left:65px;top:306px;" width="16" height="14" viewBox="0 0 16 14"><circle cx="5" cy="4.5" r="2.7" fill="none" stroke="#fff" stroke-width="1"/><path d="M0.8 12 Q0.8 7.5 5 7.5 Q9.2 7.5 9.2 12 Z" fill="none" stroke="#fff" stroke-width="1"/><circle cx="10.5" cy="3.3" r="2.5" fill="none" stroke="#fff" stroke-width="1"/><path d="M8.3 6.8 Q13.8 5.8 14.5 10.5 L9.5 10.8" fill="none" stroke="#fff" stroke-width="1"/></svg>
<svg class="r" style="left:85px;top:304px;" width="16" height="16" viewBox="0 0 16 16"><rect x="0" y="0" width="16" height="16" fill="#fff"/><rect x="1" y="2" width="14" height="2" fill="#6b6b6b"/><rect x="6" y="0.8" width="4" height="1.5" fill="#6b6b6b"/><path d="M2.5 5 H13.5 V15.5 H2.5 Z" fill="#6b6b6b"/><rect x="4.6" y="6.5" width="1.6" height="7.5" fill="#fff"/><rect x="7.2" y="6.5" width="1.6" height="7.5" fill="#fff"/><rect x="9.8" y="6.5" width="1.6" height="7.5" fill="#fff"/></svg>
<div class="r" style="left:104px;top:309px;width:1px;height:9px;background:#fff;"></div>
<div class="r" style="left:108px;top:299px;width:175px;height:27px;overflow:hidden"><div class="t" style="left:2.3px;top:7.50px;font-size:13px;line-height:13px;color:#fff">Project Iris</div></div>
<svg class="r" style="left:287px;top:304px;" width="16" height="18" viewBox="0 0 16 18"><g fill="#fff" stroke="#fff" stroke-width="2.2"><circle cx="5" cy="3.6" r="2.4" /><path d="M1.1 7.3 Q1.1 6.1 2.3 6.1 H7.7 Q8.9 6.1 8.9 7.3 V11.5 Q8.9 14.8 5 14.8 Q1.1 14.8 1.1 11.5 Z" /><circle cx="11.6" cy="3.2" r="2.1" /><path d="M9.6 5.4 H13 Q14 5.4 14 6.4 V9.8 Q14 11.8 12 11.8 L9.6 11.5 Z" /></g><circle cx="5" cy="3.6" r="2.4" fill="#8e4bb0"/><path d="M1.1 7.3 Q1.1 6.1 2.3 6.1 H7.7 Q8.9 6.1 8.9 7.3 V11.5 Q8.9 14.8 5 14.8 Q1.1 14.8 1.1 11.5 Z" fill="#8e4bb0"/><circle cx="11.6" cy="3.2" r="2.1" fill="#8e4bb0"/><path d="M9.6 5.4 H13 Q14 5.4 14 6.4 V9.8 Q14 11.8 12 11.8 L9.6 11.5 Z" fill="#8e4bb0"/></svg>
<div class="r" style="left:304px;top:309px;width:1px;height:1px;background:#fff;"></div>
<svg class="r" style="left:310px;top:304px;" width="18" height="18" viewBox="0 0 18 18"><path d="M5.4 1 H8.8 V10.5 L5.4 12.6 L1 8.2 V4.6 L5.4 8.6 Z" fill="#fff" stroke="#fff" stroke-width="1.6" stroke-linejoin="round"/><path d="M5.4 1 H8.8 V10.5 L5.4 12.6 L1 8.2 V4.6 L5.4 8.6 Z" fill="#6b6b6b"/><rect x="11.8" y="4.8" width="1" height="1" fill="#555"/><circle cx="10.8" cy="10.8" r="4.6" fill="#fff"/><circle cx="10.8" cy="10.8" r="3.7" fill="#1f7fc4"/><rect x="10.2" y="9.9" width="1.3" height="3.2" fill="#fff"/><rect x="10.2" y="8.1" width="1.3" height="1.2" fill="#fff"/></svg>
<div class="r" style="left:356px;top:299px;width:92px;height:27px;overflow:hidden"><div class="t" style="left:2.6px;letter-spacing:0.08px;top:7.50px;font-size:13px;line-height:13px;color:#fff">Microsoft 365 groups</div></div>
<div class="r" style="left:470px;top:306px;width:13px;height:13px;background:#f9f9f9;box-sizing:border-box;border:1px solid #cdcdcd"></div>
<div class="r" style="left:500px;top:299px;width:253px;height:27px;overflow:hidden"><div class="t" style="left:2.3px;letter-spacing:0.16px;top:7.50px;font-size:13px;line-height:13px;color:#fff">Members of the temporary Project Iris</div></div>
<div class="t" style="left:758.5px;top:306.50px;font-size:13px;line-height:13px;color:#fff;font-weight:normal;">Public</div>
<div class="t" style="left:854.4px;top:306.50px;font-size:13px;line-height:13px;color:#fff;font-weight:normal;">Project-Iris@ovh.ytria.io</div>
<div class="t" style="left:1115.2px;top:306.50px;font-size:13px;line-height:13px;color:#fff;font-weight:normal;">2/25/2025 09:51 AM</div>
<div class="r" style="left:1236px;top:299px;width:42px;height:27px;overflow:hidden"><div class="t" style="left:8.9px;top:7.50px;font-size:13px;line-height:13px;color:#fff">5/29/2025 12:19 PM</div></div>
<div class="r" style="left:43px;top:327px;width:1235px;height:27px;background:#0078d7;"></div>
<div class="r" style="left:83px;top:327px;width:24px;height:27px;background:#6bb5dc;"></div>
<div class="r" style="left:308px;top:327px;width:47px;height:27px;background:#6aa6dd;"></div>
<div class="r" style="left:452px;top:327px;width:47px;height:27px;background:#73ade3;"></div>
<div class="r" style="left:45px;top:332px;width:16px;height:16px;background:#fff;"></div>
<div class="r" style="left:43px;top:354px;width:1235px;height:1px;background:#e8f1fa;"></div>
<div class="r" style="left:62px;top:327px;width:1px;height:27px;background:#fff;"></div>
<div class="r" style="left:82px;top:327px;width:1px;height:27px;background:#fff;"></div>
<div class="r" style="left:307px;top:327px;width:1px;height:27px;background:#fff;"></div>
<div class="r" style="left:331px;top:327px;width:1px;height:27px;background:#fff;"></div>
<div class="r" style="left:355px;top:327px;width:1px;height:27px;background:#fff;"></div>
<div class="r" style="left:451px;top:327px;width:1px;height:27px;background:#fff;"></div>
<div class="r" style="left:499px;top:327px;width:1px;height:27px;background:#fff;"></div>
<div class="r" style="left:755px;top:327px;width:1px;height:27px;background:#fff;"></div>
<div class="r" style="left:851px;top:327px;width:1px;height:27px;background:#fff;"></div>
<div class="r" style="left:1107px;top:327px;width:1px;height:27px;background:#fff;"></div>
<div class="r" style="left:1235px;top:327px;width:1px;height:27px;background:#fff;"></div>
<svg class="r" style="left:45px;top:332px;" width="16" height="16" viewBox="0 0 16 16"><circle cx="8" cy="8" r="6" fill="#fff" stroke="#7c7c7c" stroke-width="1.6"/><circle cx="8" cy="8" r="3.3" fill="#a0a0a0"/></svg>
<svg class="r" style="left:65px;top:334px;" width="16" height="14" viewBox="0 0 16 14"><circle cx="5" cy="4.5" r="2.7" fill="none" stroke="#fff" stroke-width="1"/><path d="M0.8 12 Q0.8 7.5 5 7.5 Q9.2 7.5 9.2 12 Z" fill="none" stroke="#fff" stroke-width="1"/><circle cx="10.5" cy="3.3" r="2.5" fill="none" stroke="#fff" stroke-width="1"/><path d="M8.3 6.8 Q13.8 5.8 14.5 10.5 L9.5 10.8" fill="none" stroke="#fff" stroke-width="1"/></svg>
<svg class="r" style="left:85px;top:332px;" width="16" height="16" viewBox="0 0 16 16"><rect x="0" y="0" width="16" height="16" fill="#fff"/><rect x="1" y="2" width="14" height="2" fill="#6b6b6b"/><rect x="6" y="0.8" width="4" height="1.5" fill="#6b6b6b"/><path d="M2.5 5 H13.5 V15.5 H2.5 Z" fill="#6b6b6b"/><rect x="4.6" y="6.5" width="1.6" height="7.5" fill="#fff"/><rect x="7.2" y="6.5" width="1.6" height="7.5" fill="#fff"/><rect x="9.8" y="6.5" width="1.6" height="7.5" fill="#fff"/></svg>
<div class="r" style="left:104px;top:337px;width:1px;height:9px;background:#fff;"></div>
<div class="r" style="left:108px;top:327px;width:175px;height:27px;overflow:hidden"><div class="t" style="left:2.3px;top:7.50px;font-size:13px;line-height:13px;color:#fff">Project Jasmine</div></div>
<svg class="r" style="left:287px;top:332px;" width="16" height="18" viewBox="0 0 16 18"><g fill="#fff" stroke="#fff" stroke-width="2.2"><circle cx="5" cy="3.6" r="2.4" /><path d="M1.1 7.3 Q1.1 6.1 2.3 6.1 H7.7 Q8.9 6.1 8.9 7.3 V11.5 Q8.9 14.8 5 14.8 Q1.1 14.8 1.1 11.5 Z" /><circle cx="11.6" cy="3.2" r="2.1" /><path d="M9.6 5.4 H13 Q14 5.4 14 6.4 V9.8 Q14 11.8 12 11.8 L9.6 11.5 Z" /></g><circle cx="5" cy="3.6" r="2.4" fill="#8e4bb0"/><path d="M1.1 7.3 Q1.1 6.1 2.3 6.1 H7.7 Q8.9 6.1 8.9 7.3 V11.5 Q8.9 14.8 5 14.8 Q1.1 14.8 1.1 11.5 Z" fill="#8e4bb0"/><circle cx="11.6" cy="3.2" r="2.1" fill="#8e4bb0"/><path d="M9.6 5.4 H13 Q14 5.4 14 6.4 V9.8 Q14 11.8 12 11.8 L9.6 11.5 Z" fill="#8e4bb0"/></svg>
<div class="r" style="left:304px;top:337px;width:1px;height:1px;background:#fff;"></div>
<svg class="r" style="left:310px;top:332px;" width="18" height="18" viewBox="0 0 18 18"><path d="M5.4 1 H8.8 V10.5 L5.4 12.6 L1 8.2 V4.6 L5.4 8.6 Z" fill="#fff" stroke="#fff" stroke-width="1.6" stroke-linejoin="round"/><path d="M5.4 1 H8.8 V10.5 L5.4 12.6 L1 8.2 V4.6 L5.4 8.6 Z" fill="#6b6b6b"/><rect x="11.8" y="4.8" width="1" height="1" fill="#555"/><circle cx="10.8" cy="10.8" r="4.6" fill="#fff"/><circle cx="10.8" cy="10.8" r="3.7" fill="#1f7fc4"/><rect x="10.2" y="9.9" width="1.3" height="3.2" fill="#fff"/><rect x="10.2" y="8.1" width="1.3" height="1.2" fill="#fff"/></svg>
<div class="r" style="left:356px;top:327px;width:92px;height:27px;overflow:hidden"><div class="t" style="left:2.6px;letter-spacing:0.08px;top:7.50px;font-size:13px;line-height:13px;color:#fff">Microsoft 365 groups</div></div>
<div class="r" style="left:470px;top:334px;width:13px;height:13px;background:#f9f9f9;box-sizing:border-box;border:1px solid #cdcdcd"></div>
<div class="r" style="left:500px;top:327px;width:253px;height:27px;overflow:hidden"><div class="t" style="left:2.3px;letter-spacing:0.16px;top:7.50px;font-size:13px;line-height:13px;color:#fff">Members of the temporary Project Jasmine</div></div>
<div class="t" style="left:758.5px;top:334.50px;font-size:13px;line-height:13px;color:#fff;font-weight:normal;">Public</div>
<div class="t" style="left:854.4px;top:334.50px;font-size:13px;line-height:13px;color:#fff;font-weight:normal;">Project-Jasmine@ovh.ytria.io</div>
<div class="t" style="left:1115.2px;top:334.50px;font-size:13px;line-height:13px;color:#fff;font-weight:normal;">2/25/2025 09:51 AM</div>
<div class="r" style="left:1236px;top:327px;width:42px;height:27px;overflow:hidden"><div class="t" style="left:8.9px;top:7.50px;font-size:13px;line-height:13px;color:#fff">5/29/2025 12:19 PM</div></div>
<div class="r" style="left:43px;top:355px;width:1235px;height:27px;background:#0078d7;"></div>
<div class="r" style="left:83px;top:355px;width:24px;height:27px;background:#6bb5dc;"></div>
<div class="r" style="left:308px;top:355px;width:47px;height:27px;background:#6aa6dd;"></div>
<div class="r" style="left:452px;top:355px;width:47px;height:27px;background:#73ade3;"></div>
<div class="r" style="left:45px;top:360px;width:16px;height:16px;background:#fff;"></div>
<div class="r" style="left:43px;top:382px;width:1235px;height:1px;background:#e8f1fa;"></div>
<div class="r" style="left:62px;top:355px;width:1px;height:27px;background:#fff;"></div>
<div class="r" style="left:82px;top:355px;width:1px;height:27px;background:#fff;"></div>
<div class="r" style="left:307px;top:355px;width:1px;height:27px;background:#fff;"></div>
<div class="r" style="left:331px;top:355px;width:1px;height:27px;background:#fff;"></div>
<div class="r" style="left:355px;top:355px;width:1px;height:27px;background:#fff;"></div>
<div class="r" style="left:451px;top:355px;width:1px;height:27px;background:#fff;"></div>
<div class="r" style="left:499px;top:355px;width:1px;height:27px;background:#fff;"></div>
<div class="r" style="left:755px;top:355px;width:1px;height:27px;background:#fff;"></div>
<div class="r" style="left:851px;top:355px;width:1px;height:27px;background:#fff;"></div>
<div class="r" style="left:1107px;top:355px;width:1px;height:27px;background:#fff;"></div>
<div class="r" style="left:1235px;top:355px;width:1px;height:27px;background:#fff;"></div>
<svg class="r" style="left:45px;top:360px;" width="16" height="16" viewBox="0 0 16 16"><circle cx="8" cy="8" r="6" fill="#fff" stroke="#7c7c7c" stroke-width="1.6"/><circle cx="8" cy="8" r="3.3" fill="#a0a0a0"/></svg>
<svg class="r" style="left:65px;top:362px;" width="16" height="14" viewBox="0 0 16 14"><circle cx="5" cy="4.5" r="2.7" fill="none" stroke="#fff" stroke-width="1"/><path d="M0.8 12 Q0.8 7.5 5 7.5 Q9.2 7.5 9.2 12 Z" fill="none" stroke="#fff" stroke-width="1"/><circle cx="10.5" cy="3.3" r="2.5" fill="none" stroke="#fff" stroke-width="1"/><path d="M8.3 6.8 Q13.8 5.8 14.5 10.5 L9.5 10.8" fill="none" stroke="#fff" stroke-width="1"/></svg>
<svg class="r" style="left:85px;top:360px;" width="16" height="16" viewBox="0 0 16 16"><rect x="0" y="0" width="16" height="16" fill="#fff"/><rect x="1" y="2" width="14" height="2" fill="#6b6b6b"/><rect x="6" y="0.8" width="4" height="1.5" fill="#6b6b6b"/><path d="M2.5 5 H13.5 V15.5 H2.5 Z" fill="#6b6b6b"/><rect x="4.6" y="6.5" width="1.6" height="7.5" fill="#fff"/><rect x="7.2" y="6.5" width="1.6" height="7.5" fill="#fff"/><rect x="9.8" y="6.5" width="1.6" height="7.5" fill="#fff"/></svg>
<div class="r" style="left:104px;top:365px;width:1px;height:9px;background:#fff;"></div>
<div class="r" style="left:108px;top:355px;width:175px;height:27px;overflow:hidden"><div class="t" style="left:2.3px;top:7.50px;font-size:13px;line-height:13px;color:#fff">Project Lavender</div></div>
<svg class="r" style="left:287px;top:360px;" width="16" height="18" viewBox="0 0 16 18"><g fill="#fff" stroke="#fff" stroke-width="2.2"><circle cx="5" cy="3.6" r="2.4" /><path d="M1.1 7.3 Q1.1 6.1 2.3 6.1 H7.7 Q8.9 6.1 8.9 7.3 V11.5 Q8.9 14.8 5 14.8 Q1.1 14.8 1.1 11.5 Z" /><circle cx="11.6" cy="3.2" r="2.1" /><path d="M9.6 5.4 H13 Q14 5.4 14 6.4 V9.8 Q14 11.8 12 11.8 L9.6 11.5 Z" /></g><circle cx="5" cy="3.6" r="2.4" fill="#8e4bb0"/><path d="M1.1 7.3 Q1.1 6.1 2.3 6.1 H7.7 Q8.9 6.1 8.9 7.3 V11.5 Q8.9 14.8 5 14.8 Q1.1 14.8 1.1 11.5 Z" fill="#8e4bb0"/><circle cx="11.6" cy="3.2" r="2.1" fill="#8e4bb0"/><path d="M9.6 5.4 H13 Q14 5.4 14 6.4 V9.8 Q14 11.8 12 11.8 L9.6 11.5 Z" fill="#8e4bb0"/></svg>
<div class="r" style="left:304px;top:365px;width:1px;height:1px;background:#fff;"></div>
<svg class="r" style="left:310px;top:360px;" width="18" height="18" viewBox="0 0 18 18"><path d="M5.4 1 H8.8 V10.5 L5.4 12.6 L1 8.2 V4.6 L5.4 8.6 Z" fill="#fff" stroke="#fff" stroke-width="1.6" stroke-linejoin="round"/><path d="M5.4 1 H8.8 V10.5 L5.4 12.6 L1 8.2 V4.6 L5.4 8.6 Z" fill="#6b6b6b"/><rect x="11.8" y="4.8" width="1" height="1" fill="#555"/><circle cx="10.8" cy="10.8" r="4.6" fill="#fff"/><circle cx="10.8" cy="10.8" r="3.7" fill="#1f7fc4"/><rect x="10.2" y="9.9" width="1.3" height="3.2" fill="#fff"/><rect x="10.2" y="8.1" width="1.3" height="1.2" fill="#fff"/></svg>
<div class="r" style="left:356px;top:355px;width:92px;height:27px;overflow:hidden"><div class="t" style="left:2.6px;letter-spacing:0.08px;top:7.50px;font-size:13px;line-height:13px;color:#fff">Microsoft 365 groups</div></div>
<div class="r" style="left:470px;top:362px;width:13px;height:13px;background:#f9f9f9;box-sizing:border-box;border:1px solid #cdcdcd"></div>
<div class="r" style="left:500px;top:355px;width:253px;height:27px;overflow:hidden"><div class="t" style="left:2.3px;letter-spacing:0.16px;top:7.50px;font-size:13px;line-height:13px;color:#fff">Members of the temporary Project Lavender</div></div>
<div class="t" style="left:758.5px;top:362.50px;font-size:13px;line-height:13px;color:#fff;font-weight:normal;">Public</div>
<div class="t" style="left:854.4px;top:362.50px;font-size:13px;line-height:13px;color:#fff;font-weight:normal;">Project-Lavender@ovh.ytria.io</div>
<div class="t" style="left:1115.2px;top:362.50px;font-size:13px;line-height:13px;color:#fff;font-weight:normal;">2/25/2025 09:51 AM</div>
<div class="r" style="left:1236px;top:355px;width:42px;height:27px;overflow:hidden"><div class="t" style="left:8.9px;top:7.50px;font-size:13px;line-height:13px;color:#fff">5/29/2025 12:19 PM</div></div>
<div class="r" style="left:43px;top:383px;width:1235px;height:27px;background:#0078d7;"></div>
<div class="r" style="left:83px;top:383px;width:24px;height:27px;background:#6bb5dc;"></div>
<div class="r" style="left:308px;top:383px;width:47px;height:27px;background:#6aa6dd;"></div>
<div class="r" style="left:452px;top:383px;width:47px;height:27px;background:#73ade3;"></div>
<div class="r" style="left:45px;top:388px;width:16px;height:16px;background:#fff;"></div>
<div class="r" style="left:43px;top:410px;width:1235px;height:1px;background:#e8f1fa;"></div>
<div class="r" style="left:62px;top:383px;width:1px;height:27px;background:#fff;"></div>
<div class="r" style="left:82px;top:383px;width:1px;height:27px;background:#fff;"></div>
<div class="r" style="left:307px;top:383px;width:1px;height:27px;background:#fff;"></div>
<div class="r" style="left:331px;top:383px;width:1px;height:27px;background:#fff;"></div>
<div class="r" style="left:355px;top:383px;width:1px;height:27px;background:#fff;"></div>
<div class="r" style="left:451px;top:383px;width:1px;height:27px;background:#fff;"></div>
<div class="r" style="left:499px;top:383px;width:1px;height:27px;background:#fff;"></div>
<div class="r" style="left:755px;top:383px;width:1px;height:27px;background:#fff;"></div>
<div class="r" style="left:851px;top:383px;width:1px;height:27px;background:#fff;"></div>
<div class="r" style="left:1107px;top:383px;width:1px;height:27px;background:#fff;"></div>
<div class="r" style="left:1235px;top:383px;width:1px;height:27px;background:#fff;"></div>
<svg class="r" style="left:45px;top:388px;" width="16" height="16" viewBox="0 0 16 16"><circle cx="8" cy="8" r="6" fill="#fff" stroke="#7c7c7c" stroke-width="1.6"/><circle cx="8" cy="8" r="3.3" fill="#a0a0a0"/></svg>
<svg class="r" style="left:65px;top:390px;" width="16" height="14" viewBox="0 0 16 14"><circle cx="5" cy="4.5" r="2.7" fill="none" stroke="#fff" stroke-width="1"/><path d="M0.8 12 Q0.8 7.5 5 7.5 Q9.2 7.5 9.2 12 Z" fill="none" stroke="#fff" stroke-width="1"/><circle cx="10.5" cy="3.3" r="2.5" fill="none" stroke="#fff" stroke-width="1"/><path d="M8.3 6.8 Q13.8 5.8 14.5 10.5 L9.5 10.8" fill="none" stroke="#fff" stroke-width="1"/></svg>
<svg class="r" style="left:85px;top:388px;" width="16" height="16" viewBox="0 0 16 16"><rect x="0" y="0" width="16" height="16" fill="#fff"/><rect x="1" y="2" width="14" height="2" fill="#6b6b6b"/><rect x="6" y="0.8" width="4" height="1.5" fill="#6b6b6b"/><path d="M2.5 5 H13.5 V15.5 H2.5 Z" fill="#6b6b6b"/><rect x="4.6" y="6.5" width="1.6" height="7.5" fill="#fff"/><rect x="7.2" y="6.5" width="1.6" height="7.5" fill="#fff"/><rect x="9.8" y="6.5" width="1.6" height="7.5" fill="#fff"/></svg>
<div class="r" style="left:104px;top:393px;width:1px;height:9px;background:#fff;"></div>
<div class="r" style="left:108px;top:383px;width:175px;height:27px;overflow:hidden"><div class="t" style="left:2.3px;top:7.50px;font-size:13px;line-height:13px;color:#fff">Project Lilac</div></div>
<svg class="r" style="left:287px;top:388px;" width="16" height="18" viewBox="0 0 16 18"><g fill="#fff" stroke="#fff" stroke-width="2.2"><circle cx="5" cy="3.6" r="2.4" /><path d="M1.1 7.3 Q1.1 6.1 2.3 6.1 H7.7 Q8.9 6.1 8.9 7.3 V11.5 Q8.9 14.8 5 14.8 Q1.1 14.8 1.1 11.5 Z" /><circle cx="11.6" cy="3.2" r="2.1" /><path d="M9.6 5.4 H13 Q14 5.4 14 6.4 V9.8 Q14 11.8 12 11.8 L9.6 11.5 Z" /></g><circle cx="5" cy="3.6" r="2.4" fill="#8e4bb0"/><path d="M1.1 7.3 Q1.1 6.1 2.3 6.1 H7.7 Q8.9 6.1 8.9 7.3 V11.5 Q8.9 14.8 5 14.8 Q1.1 14.8 1.1 11.5 Z" fill="#8e4bb0"/><circle cx="11.6" cy="3.2" r="2.1" fill="#8e4bb0"/><path d="M9.6 5.4 H13 Q14 5.4 14 6.4 V9.8 Q14 11.8 12 11.8 L9.6 11.5 Z" fill="#8e4bb0"/></svg>
<div class="r" style="left:304px;top:393px;width:1px;height:1px;background:#fff;"></div>
<svg class="r" style="left:310px;top:388px;" width="18" height="18" viewBox="0 0 18 18"><path d="M5.4 1 H8.8 V10.5 L5.4 12.6 L1 8.2 V4.6 L5.4 8.6 Z" fill="#fff" stroke="#fff" stroke-width="1.6" stroke-linejoin="round"/><path d="M5.4 1 H8.8 V10.5 L5.4 12.6 L1 8.2 V4.6 L5.4 8.6 Z" fill="#6b6b6b"/><rect x="11.8" y="4.8" width="1" height="1" fill="#555"/><circle cx="10.8" cy="10.8" r="4.6" fill="#fff"/><circle cx="10.8" cy="10.8" r="3.7" fill="#1f7fc4"/><rect x="10.2" y="9.9" width="1.3" height="3.2" fill="#fff"/><rect x="10.2" y="8.1" width="1.3" height="1.2" fill="#fff"/></svg>
<div class="r" style="left:356px;top:383px;width:92px;height:27px;overflow:hidden"><div class="t" style="left:2.6px;letter-spacing:0.08px;top:7.50px;font-size:13px;line-height:13px;color:#fff">Microsoft 365 groups</div></div>
<div class="r" style="left:470px;top:390px;width:13px;height:13px;background:#f9f9f9;box-sizing:border-box;border:1px solid #cdcdcd"></div>
<div class="r" style="left:500px;top:383px;width:253px;height:27px;overflow:hidden"><div class="t" style="left:2.3px;letter-spacing:0.16px;top:7.50px;font-size:13px;line-height:13px;color:#fff">Members of the temporary Project Lilac</div></div>
<div class="t" style="left:758.5px;top:390.50px;font-size:13px;line-height:13px;color:#fff;font-weight:normal;">Public</div>
<div class="t" style="left:854.4px;top:390.50px;font-size:13px;line-height:13px;color:#fff;font-weight:normal;">Project-Lilac@ovh.ytria.io</div>
<div class="t" style="left:1115.2px;top:390.50px;font-size:13px;line-height:13px;color:#fff;font-weight:normal;">2/25/2025 09:51 AM</div>
<div class="r" style="left:1236px;top:383px;width:42px;height:27px;overflow:hidden"><div class="t" style="left:8.9px;top:7.50px;font-size:13px;line-height:13px;color:#fff">5/29/2025 12:19 PM</div></div>
<div class="r" style="left:43px;top:411px;width:1235px;height:27px;background:#0078d7;"></div>
<div class="r" style="left:83px;top:411px;width:24px;height:27px;background:#6bb5dc;"></div>
<div class="r" style="left:308px;top:411px;width:47px;height:27px;background:#6aa6dd;"></div>
<div class="r" style="left:452px;top:411px;width:47px;height:27px;background:#73ade3;"></div>
<div class="r" style="left:45px;top:416px;width:16px;height:16px;background:#fff;"></div>
<div class="r" style="left:43px;top:438px;width:1235px;height:1px;background:#eaeaea;"></div>
<div class="r" style="left:62px;top:411px;width:1px;height:27px;background:#fff;"></div>
<div class="r" style="left:82px;top:411px;width:1px;height:27px;background:#fff;"></div>
<div class="r" style="left:307px;top:411px;width:1px;height:27px;background:#fff;"></div>
<div class="r" style="left:331px;top:411px;width:1px;height:27px;background:#fff;"></div>
<div class="r" style="left:355px;top:411px;width:1px;height:27px;background:#fff;"></div>
<div class="r" style="left:451px;top:411px;width:1px;height:27px;background:#fff;"></div>
<div class="r" style="left:499px;top:411px;width:1px;height:27px;background:#fff;"></div>
<div class="r" style="left:755px;top:411px;width:1px;height:27px;background:#fff;"></div>
<div class="r" style="left:851px;top:411px;width:1px;height:27px;background:#fff;"></div>
<div class="r" style="left:1107px;top:411px;width:1px;height:27px;background:#fff;"></div>
<div class="r" style="left:1235px;top:411px;width:1px;height:27px;background:#fff;"></div>
<svg class="r" style="left:45px;top:416px;" width="16" height="16" viewBox="0 0 16 16"><circle cx="8" cy="8" r="6" fill="#fff" stroke="#7c7c7c" stroke-width="1.6"/><circle cx="8" cy="8" r="3.3" fill="#a0a0a0"/></svg>
<svg class="r" style="left:65px;top:418px;" width="16" height="14" viewBox="0 0 16 14"><circle cx="5" cy="4.5" r="2.7" fill="none" stroke="#fff" stroke-width="1"/><path d="M0.8 12 Q0.8 7.5 5 7.5 Q9.2 7.5 9.2 12 Z" fill="none" stroke="#fff" stroke-width="1"/><circle cx="10.5" cy="3.3" r="2.5" fill="none" stroke="#fff" stroke-width="1"/><path d="M8.3 6.8 Q13.8 5.8 14.5 10.5 L9.5 10.8" fill="none" stroke="#fff" stroke-width="1"/></svg>
<svg class="r" style="left:85px;top:416px;" width="16" height="16" viewBox="0 0 16 16"><rect x="0" y="0" width="16" height="16" fill="#fff"/><rect x="1" y="2" width="14" height="2" fill="#6b6b6b"/><rect x="6" y="0.8" width="4" height="1.5" fill="#6b6b6b"/><path d="M2.5 5 H13.5 V15.5 H2.5 Z" fill="#6b6b6b"/><rect x="4.6" y="6.5" width="1.6" height="7.5" fill="#fff"/><rect x="7.2" y="6.5" width="1.6" height="7.5" fill="#fff"/><rect x="9.8" y="6.5" width="1.6" height="7.5" fill="#fff"/></svg>
<div class="r" style="left:104px;top:421px;width:1px;height:9px;background:#fff;"></div>
<div class="r" style="left:108px;top:411px;width:175px;height:27px;overflow:hidden"><div class="t" style="left:2.3px;top:7.50px;font-size:13px;line-height:13px;color:#fff">Project Lily</div></div>
<svg class="r" style="left:287px;top:416px;" width="16" height="18" viewBox="0 0 16 18"><g fill="#fff" stroke="#fff" stroke-width="2.2"><circle cx="5" cy="3.6" r="2.4" /><path d="M1.1 7.3 Q1.1 6.1 2.3 6.1 H7.7 Q8.9 6.1 8.9 7.3 V11.5 Q8.9 14.8 5 14.8 Q1.1 14.8 1.1 11.5 Z" /><circle cx="11.6" cy="3.2" r="2.1" /><path d="M9.6 5.4 H13 Q14 5.4 14 6.4 V9.8 Q14 11.8 12 11.8 L9.6 11.5 Z" /></g><circle cx="5" cy="3.6" r="2.4" fill="#8e4bb0"/><path d="M1.1 7.3 Q1.1 6.1 2.3 6.1 H7.7 Q8.9 6.1 8.9 7.3 V11.5 Q8.9 14.8 5 14.8 Q1.1 14.8 1.1 11.5 Z" fill="#8e4bb0"/><circle cx="11.6" cy="3.2" r="2.1" fill="#8e4bb0"/><path d="M9.6 5.4 H13 Q14 5.4 14 6.4 V9.8 Q14 11.8 12 11.8 L9.6 11.5 Z" fill="#8e4bb0"/></svg>
<div class="r" style="left:304px;top:421px;width:1px;height:1px;background:#fff;"></div>
<svg class="r" style="left:310px;top:416px;" width="18" height="18" viewBox="0 0 18 18"><path d="M5.4 1 H8.8 V10.5 L5.4 12.6 L1 8.2 V4.6 L5.4 8.6 Z" fill="#fff" stroke="#fff" stroke-width="1.6" stroke-linejoin="round"/><path d="M5.4 1 H8.8 V10.5 L5.4 12.6 L1 8.2 V4.6 L5.4 8.6 Z" fill="#6b6b6b"/><rect x="11.8" y="4.8" width="1" height="1" fill="#555"/><circle cx="10.8" cy="10.8" r="4.6" fill="#fff"/><circle cx="10.8" cy="10.8" r="3.7" fill="#1f7fc4"/><rect x="10.2" y="9.9" width="1.3" height="3.2" fill="#fff"/><rect x="10.2" y="8.1" width="1.3" height="1.2" fill="#fff"/></svg>
<div class="r" style="left:356px;top:411px;width:92px;height:27px;overflow:hidden"><div class="t" style="left:2.6px;letter-spacing:0.08px;top:7.50px;font-size:13px;line-height:13px;color:#fff">Microsoft 365 groups</div></div>
<div class="r" style="left:470px;top:418px;width:13px;height:13px;background:#f9f9f9;box-sizing:border-box;border:1px solid #cdcdcd"></div>
<div class="r" style="left:500px;top:411px;width:253px;height:27px;overflow:hidden"><div class="t" style="left:2.3px;letter-spacing:0.16px;top:7.50px;font-size:13px;line-height:13px;color:#fff">Members of the temporary Project Lily</div></div>
<div class="t" style="left:758.5px;top:418.50px;font-size:13px;line-height:13px;color:#fff;font-weight:normal;">Public</div>
<div class="t" style="left:854.4px;top:418.50px;font-size:13px;line-height:13px;color:#fff;font-weight:normal;">Project-Lily@ovh.ytria.io</div>
<div class="t" style="left:1115.2px;top:418.50px;font-size:13px;line-height:13px;color:#fff;font-weight:normal;">2/25/2025 09:51 AM</div>
<div class="r" style="left:1236px;top:411px;width:42px;height:27px;overflow:hidden"><div class="t" style="left:8.9px;top:7.50px;font-size:13px;line-height:13px;color:#fff">5/29/2025 12:19 PM</div></div>
<div class="r" style="left:308px;top:439px;width:47px;height:27px;background:#d6d6d6;"></div>
<div class="r" style="left:452px;top:439px;width:47px;height:27px;background:#f0f0f0;"></div>
<div class="r" style="left:43px;top:466px;width:1235px;height:1px;background:#eaeaea;"></div>
<div class="r" style="left:62px;top:439px;width:1px;height:27px;background:#efefef;"></div>
<div class="r" style="left:82px;top:439px;width:1px;height:27px;background:#efefef;"></div>
<div class="r" style="left:307px;top:439px;width:1px;height:27px;background:#efefef;"></div>
<div class="r" style="left:331px;top:439px;width:1px;height:27px;background:#efefef;"></div>
<div class="r" style="left:355px;top:439px;width:1px;height:27px;background:#efefef;"></div>
<div class="r" style="left:451px;top:439px;width:1px;height:27px;background:#efefef;"></div>
<div class="r" style="left:499px;top:439px;width:1px;height:27px;background:#efefef;"></div>
<div class="r" style="left:755px;top:439px;width:1px;height:27px;background:#efefef;"></div>
<div class="r" style="left:851px;top:439px;width:1px;height:27px;background:#efefef;"></div>
<div class="r" style="left:1107px;top:439px;width:1px;height:27px;background:#efefef;"></div>
<div class="r" style="left:1235px;top:439px;width:1px;height:27px;background:#efefef;"></div>
<svg class="r" style="left:45px;top:444px;" width="16" height="16" viewBox="0 0 16 16"><circle cx="8" cy="8" r="6" fill="#fff" stroke="#7c7c7c" stroke-width="1.6"/><circle cx="8" cy="8" r="3.3" fill="#a0a0a0"/></svg>
<svg class="r" style="left:65px;top:446px;" width="16" height="14" viewBox="0 0 16 14"><circle cx="4.6" cy="3.8" r="2.5" fill="#77abdc"/><path d="M1 10.5 Q1 6.6 4.6 6.6 Q8.2 6.6 8.2 10.5 Z" fill="#77abdc"/><circle cx="10.6" cy="2.4" r="2.3" fill="#77abdc"/><path d="M8.6 5.2 Q13.6 4.2 14.8 8.8 L10 9 Z" fill="#77abdc"/></svg>
<div class="r" style="left:108px;top:439px;width:175px;height:27px;overflow:hidden"><div class="t" style="left:2.3px;top:7.50px;font-size:13px;line-height:13px;color:#1e1e1e">Project Lotus</div></div>
<svg class="r" style="left:287px;top:444px;" width="16" height="18" viewBox="0 0 16 18"><circle cx="5" cy="3.6" r="2.4" fill="#8e4bb0"/><path d="M1.1 7.3 Q1.1 6.1 2.3 6.1 H7.7 Q8.9 6.1 8.9 7.3 V11.5 Q8.9 14.8 5 14.8 Q1.1 14.8 1.1 11.5 Z" fill="#8e4bb0"/><circle cx="11.6" cy="3.2" r="2.1" fill="#8e4bb0"/><path d="M9.6 5.4 H13 Q14 5.4 14 6.4 V9.8 Q14 11.8 12 11.8 L9.6 11.5 Z" fill="#8e4bb0"/></svg>
<div class="r" style="left:304px;top:449px;width:1px;height:1px;background:#c0501e;"></div>
<svg class="r" style="left:310px;top:444px;" width="18" height="18" viewBox="0 0 18 18"><path d="M5.4 1 H8.8 V10.5 L5.4 12.6 L1 8.2 V4.6 L5.4 8.6 Z" fill="#fff" stroke="#fff" stroke-width="1.6" stroke-linejoin="round"/><path d="M5.4 1 H8.8 V10.5 L5.4 12.6 L1 8.2 V4.6 L5.4 8.6 Z" fill="#6b6b6b"/><rect x="11.8" y="4.8" width="1" height="1" fill="#555"/><circle cx="10.8" cy="10.8" r="4.6" fill="#fff"/><circle cx="10.8" cy="10.8" r="3.7" fill="#1f7fc4"/><rect x="10.2" y="9.9" width="1.3" height="3.2" fill="#fff"/><rect x="10.2" y="8.1" width="1.3" height="1.2" fill="#fff"/></svg>
<div class="r" style="left:356px;top:439px;width:92px;height:27px;overflow:hidden"><div class="t" style="left:2.6px;letter-spacing:0.08px;top:7.50px;font-size:13px;line-height:13px;color:#1e1e1e">Microsoft 365 groups</div></div>
<div class="r" style="left:470px;top:446px;width:13px;height:13px;background:#f9f9f9;box-sizing:border-box;border:1px solid #cdcdcd"></div>
<div class="r" style="left:500px;top:439px;width:253px;height:27px;overflow:hidden"><div class="t" style="left:2.3px;letter-spacing:0.16px;top:7.50px;font-size:13px;line-height:13px;color:#1e1e1e">Members of the temporary Project Lotus</div></div>
<div class="t" style="left:758.5px;top:446.50px;font-size:13px;line-height:13px;color:#1e1e1e;font-weight:normal;">Public</div>
<div class="t" style="left:854.4px;top:446.50px;font-size:13px;line-height:13px;color:#1e1e1e;font-weight:normal;">Project-Lotus@ovh.ytria.io</div>
<div class="t" style="left:1115.2px;top:446.50px;font-size:13px;line-height:13px;color:#1e1e1e;font-weight:normal;">2/25/2025 09:51 AM</div>
<div class="r" style="left:1236px;top:439px;width:42px;height:27px;overflow:hidden"><div class="t" style="left:8.9px;top:7.50px;font-size:13px;line-height:13px;color:#1e1e1e">5/29/2025 12:19 PM</div></div>
<div class="r" style="left:308px;top:467px;width:47px;height:27px;background:#d6d6d6;"></div>
<div class="r" style="left:452px;top:467px;width:47px;height:27px;background:#f0f0f0;"></div>
<div class="r" style="left:43px;top:494px;width:1235px;height:1px;background:#eaeaea;"></div>
<div class="r" style="left:62px;top:467px;width:1px;height:27px;background:#efefef;"></div>
<div class="r" style="left:82px;top:467px;width:1px;height:27px;background:#efefef;"></div>
<div class="r" style="left:307px;top:467px;width:1px;height:27px;background:#efefef;"></div>
<div class="r" style="left:331px;top:467px;width:1px;height:27px;background:#efefef;"></div>
<div class="r" style="left:355px;top:467px;width:1px;height:27px;background:#efefef;"></div>
<div class="r" style="left:451px;top:467px;width:1px;height:27px;background:#efefef;"></div>
<div class="r" style="left:499px;top:467px;width:1px;height:27px;background:#efefef;"></div>
<div class="r" style="left:755px;top:467px;width:1px;height:27px;background:#efefef;"></div>
<div class="r" style="left:851px;top:467px;width:1px;height:27px;background:#efefef;"></div>
<div class="r" style="left:1107px;top:467px;width:1px;height:27px;background:#efefef;"></div>
<div class="r" style="left:1235px;top:467px;width:1px;height:27px;background:#efefef;"></div>
<svg class="r" style="left:45px;top:472px;" width="16" height="16" viewBox="0 0 16 16"><circle cx="8" cy="8" r="6" fill="#fff" stroke="#7c7c7c" stroke-width="1.6"/><circle cx="8" cy="8" r="3.3" fill="#a0a0a0"/></svg>
<svg class="r" style="left:65px;top:474px;" width="16" height="14" viewBox="0 0 16 14"><circle cx="4.6" cy="3.8" r="2.5" fill="#77abdc"/><path d="M1 10.5 Q1 6.6 4.6 6.6 Q8.2 6.6 8.2 10.5 Z" fill="#77abdc"/><circle cx="10.6" cy="2.4" r="2.3" fill="#77abdc"/><path d="M8.6 5.2 Q13.6 4.2 14.8 8.8 L10 9 Z" fill="#77abdc"/></svg>
<div class="r" style="left:108px;top:467px;width:175px;height:27px;overflow:hidden"><div class="t" style="left:2.3px;top:7.50px;font-size:13px;line-height:13px;color:#1e1e1e">Project Magnolia</div></div>
<svg class="r" style="left:287px;top:472px;" width="16" height="18" viewBox="0 0 16 18"><circle cx="5" cy="3.6" r="2.4" fill="#8e4bb0"/><path d="M1.1 7.3 Q1.1 6.1 2.3 6.1 H7.7 Q8.9 6.1 8.9 7.3 V11.5 Q8.9 14.8 5 14.8 Q1.1 14.8 1.1 11.5 Z" fill="#8e4bb0"/><circle cx="11.6" cy="3.2" r="2.1" fill="#8e4bb0"/><path d="M9.6 5.4 H13 Q14 5.4 14 6.4 V9.8 Q14 11.8 12 11.8 L9.6 11.5 Z" fill="#8e4bb0"/></svg>
<div class="r" style="left:304px;top:477px;width:1px;height:1px;background:#c0501e;"></div>
<svg class="r" style="left:310px;top:472px;" width="18" height="18" viewBox="0 0 18 18"><path d="M5.4 1 H8.8 V10.5 L5.4 12.6 L1 8.2 V4.6 L5.4 8.6 Z" fill="#fff" stroke="#fff" stroke-width="1.6" stroke-linejoin="round"/><path d="M5.4 1 H8.8 V10.5 L5.4 12.6 L1 8.2 V4.6 L5.4 8.6 Z" fill="#6b6b6b"/><rect x="11.8" y="4.8" width="1" height="1" fill="#555"/><circle cx="10.8" cy="10.8" r="4.6" fill="#fff"/><circle cx="10.8" cy="10.8" r="3.7" fill="#1f7fc4"/><rect x="10.2" y="9.9" width="1.3" height="3.2" fill="#fff"/><rect x="10.2" y="8.1" width="1.3" height="1.2" fill="#fff"/></svg>
<div class="r" style="left:356px;top:467px;width:92px;height:27px;overflow:hidden"><div class="t" style="left:2.6px;letter-spacing:0.08px;top:7.50px;font-size:13px;line-height:13px;color:#1e1e1e">Microsoft 365 groups</div></div>
<div class="r" style="left:470px;top:474px;width:13px;height:13px;background:#f9f9f9;box-sizing:border-box;border:1px solid #cdcdcd"></div>
<div class="r" style="left:500px;top:467px;width:253px;height:27px;overflow:hidden"><div class="t" style="left:2.3px;letter-spacing:0.16px;top:7.50px;font-size:13px;line-height:13px;color:#1e1e1e">Members of the temporary Project Magnolia</div></div>
<div class="t" style="left:758.5px;top:474.50px;font-size:13px;line-height:13px;color:#1e1e1e;font-weight:normal;">Public</div>
<div class="t" style="left:854.4px;top:474.50px;font-size:13px;line-height:13px;color:#1e1e1e;font-weight:normal;">Project-Magnolia@ovh.ytria.io</div>
<div class="t" style="left:1115.2px;top:474.50px;font-size:13px;line-height:13px;color:#1e1e1e;font-weight:normal;">2/25/2025 09:51 AM</div>
<div class="r" style="left:1236px;top:467px;width:42px;height:27px;overflow:hidden"><div class="t" style="left:8.9px;top:7.50px;font-size:13px;line-height:13px;color:#1e1e1e">5/29/2025 12:19 PM</div></div>
<div class="r" style="left:107px;top:214px;width:1px;height:280px;background:#2b3d52;"></div>
<div class="r" style="left:108px;top:214px;width:1px;height:280px;background:#0a78d6;"></div>
<div class="r" style="left:282px;top:214px;width:1px;height:280px;background:#0a78d6;"></div>
<div class="r" style="left:283px;top:215px;width:1px;height:27px;background:#f2f2f2;"></div>
<div class="r" style="left:283px;top:243px;width:1px;height:27px;background:#f2f2f2;"></div>
<div class="r" style="left:283px;top:271px;width:1px;height:27px;background:#f2f2f2;"></div>
<div class="r" style="left:283px;top:299px;width:1px;height:27px;background:#fff;"></div>
<div class="r" style="left:283px;top:327px;width:1px;height:27px;background:#fff;"></div>
<div class="r" style="left:283px;top:355px;width:1px;height:27px;background:#fff;"></div>
<div class="r" style="left:283px;top:383px;width:1px;height:27px;background:#fff;"></div>
<div class="r" style="left:283px;top:411px;width:1px;height:27px;background:#fff;"></div>
<div class="r" style="left:283px;top:439px;width:1px;height:27px;background:#f2f2f2;"></div>
<div class="r" style="left:283px;top:467px;width:1px;height:27px;background:#f2f2f2;"></div>
<div class="r" style="left:0px;top:182px;width:43px;height:318px;background:#955ca5;"></div>
<div class="r" style="left:1278px;top:182px;width:43px;height:318px;background:#955ca5;"></div>
<svg class="r" style="left:0px;top:185px;" width="43" height="37" viewBox="0 0 43 37"><path d="M5.8 24.8 V8.1 H24.2 V14 M5.8 24.8 H16 M5.8 11.1 H24.2 M5.8 14.4 H22.5 M5.8 17.8 H20 M5.8 21.3 H17.5 M10.3 11.1 V24.8 M14.8 11.1 V24.8 M19.3 11.1 V17.5" fill="none" stroke="#fff" stroke-width="1.4"/><path d="M22.3 15.6 H28.6 L25.8 19.8 H29 L19.6 29.6 L22.4 22.6 H19.3 Z" fill="#955ca5" stroke="#fff" stroke-width="1.3" stroke-linejoin="miter"/><path d="M32.8 13.6 L38.3 19 L32.8 24.5" fill="none" stroke="#fff" stroke-width="1.8"/></svg>
<svg class="r" style="left:1278px;top:185px;" width="43" height="37" viewBox="0 0 43 37"><path d="M10.8 12.3 L5.2 18.4 L10.8 24.5" fill="none" stroke="#fff" stroke-width="2"/><rect x="18.55" y="7.75" width="15.9" height="22.2" fill="none" stroke="#fff" stroke-width="1.5"/><path d="M20.8 11.9 H22.3 M23.7 11.9 H32.6 M20.8 16.7 H22.3 M23.7 16.7 H30.7 M20.8 21.1 H22.3 M23.7 21.1 H27.8 M20.8 25.9 H22.3 M23.7 25.9 H32.6" stroke="#fff" stroke-width="1.5"/></svg>
<div class="r" style="left:658px;top:148px;width:263px;height:50px;background:#fdfdfd;box-sizing:border-box;border:1px solid #c6c6c6;box-shadow:1px 1px 0 rgba(0,0,0,0.30),2px 2px 2px rgba(0,0,0,0.22)"></div>
<div class="t" style="left:670.6px;top:156.94px;font-size:12px;line-height:12px;color:#555;font-weight:bold;">Permanently Delete Groups (Shift+Delete)</div>
<div class="t" style="left:670.6px;top:177.54px;font-size:12px;line-height:12px;color:#707070;font-weight:normal;letter-spacing:-0.2px">Permanently Delete Groups.</div>
<div class="r" style="left:424px;top:14px;width:40px;height:40px;border-radius:50%;background:#f4209f;box-shadow:0 3px 4px rgba(0,0,0,0.35)"></div>
<div class="t" style="left:343.5px;width:200px;text-align:center;top:21.45px;font-size:29px;line-height:29px;color:#fff;font-weight:normal;">2</div>
<div class="r" style="left:674px;top:14px;width:40px;height:40px;border-radius:50%;background:#f4209f;box-shadow:0 3px 4px rgba(0,0,0,0.35)"></div>
<div class="t" style="left:593.5px;width:200px;text-align:center;top:21.45px;font-size:29px;line-height:29px;color:#fff;font-weight:normal;">1</div>
</body></html>
